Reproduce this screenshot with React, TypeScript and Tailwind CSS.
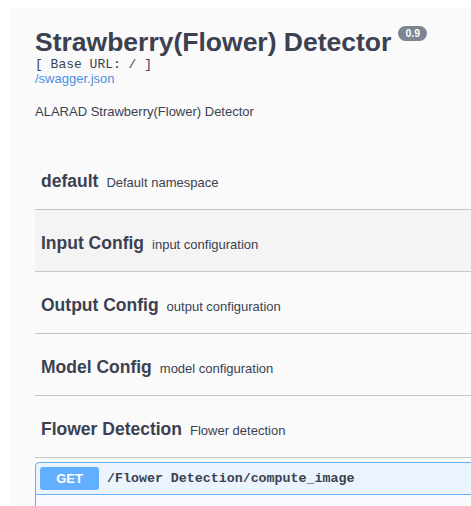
const tags = [
  { name: "default", description: "Default namespace" },
  { name: "Input Config", description: "input configuration", hover: true },
  { name: "Output Config", description: "output configuration" },
  { name: "Model Config", description: "model configuration" },
  { name: "Flower Detection", description: "Flower detection" },
];

export default function App() {
  return (
    <div className="h-[506px] w-full overflow-hidden bg-white pl-[11px] pt-[8px] font-['Liberation_Sans',Arial,sans-serif] text-[#3b4151]">
      <div className="min-h-[498px] w-[620px] bg-[#fafafa] pl-6 pt-[19px]">
        {/* API info header */}
        <div className="flex items-start">
          <h2 className="text-[26.5px] font-bold leading-[30px]">Strawberry(Flower) Detector</h2>
          <span className="ml-[7px] mt-[-1px] flex h-[15px] items-center rounded-full bg-[#7d8492] px-[7px] text-[10.5px] font-bold leading-none text-white">
            0.9
          </span>
        </div>
        <div className="mt-[1px] font-['Liberation_Mono','Courier_New',monospace] text-[13px] leading-[14px]">
          [ Base URL: / ]
        </div>
        <a href="#" className="block text-[13px] leading-[14px] text-[#4990e2]">
          /swagger.json
        </a>
        <p className="mt-[18px] text-[13px] leading-[16px]">ALARAD Strawberry(Flower) Detector</p>

        {/* Tag sections */}
        <div className="mt-[28px]">
          {tags.map((tag) => (
            <div
              key={tag.name}
              className={`flex h-[62px] items-baseline gap-[8px] border-b border-[#c4c6cb] pl-[6px] pt-[22px] ${
                tag.hover ? "bg-[#f4f4f4]" : ""
              }`}
            >
              <span className="text-[17.5px] font-bold leading-[22px]">{tag.name}</span>
              <span className="text-[13px] leading-[22px]">{tag.description}</span>
            </div>
          ))}
        </div>

        {/* Expanded operation */}
        <div className="mt-[4px] rounded-[4px] border border-[#61affe] bg-[#ebf3fc]">
          <div className="flex h-[32px] items-center border-b border-[#61affe] px-[4px]">
            <span className="flex h-[23px] w-[59px] items-center justify-center rounded-[3px] bg-[#61affe] text-[13px] font-bold text-white">
              GET
            </span>
            <span className="ml-[8px] font-['Liberation_Mono','Courier_New',monospace] text-[13.3px] font-bold">
              /Flower Detection/compute_image
            </span>
          </div>
          <div className="h-[40px] bg-[#f8fafe]" />
        </div>
      </div>
    </div>
  );
}
